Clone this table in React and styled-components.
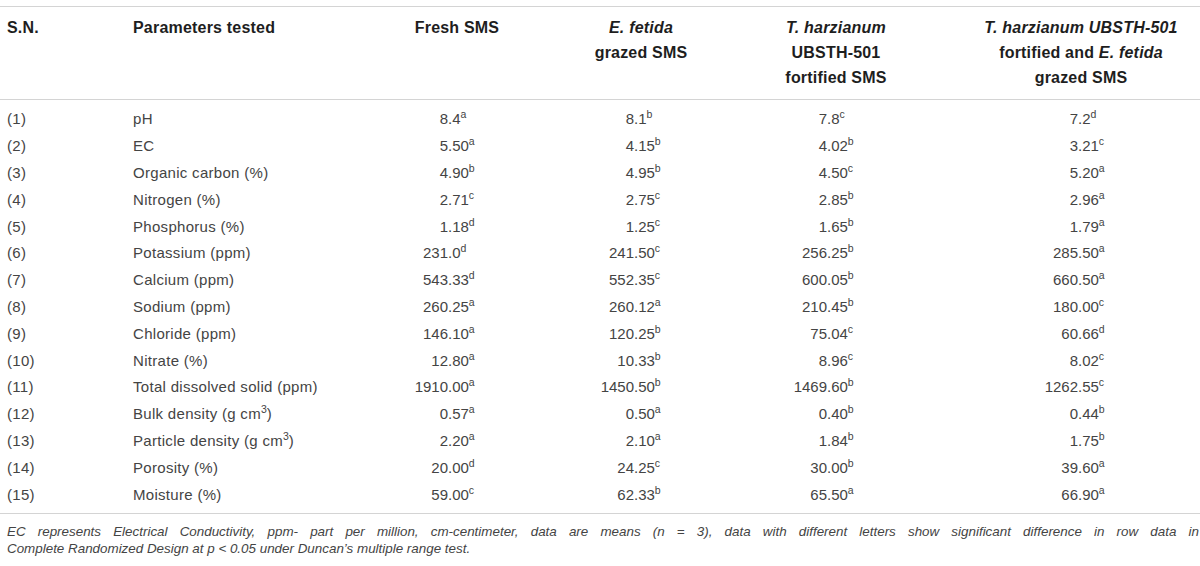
import React from 'react'
import styled, {createGlobalStyle} from 'styled-components'

const colors = {
  text: '#444444',
  head: '#1e1e1e',
  rule: '#d4d4d4',
}

const GRID = '126px 216px 230px 138px 252px 238px'

const GlobalStyle = createGlobalStyle`
  html, body {
    margin: 0;
    padding: 0;
    background: #fff;
  }
  body {
    font-family: "Liberation Sans", Arial, sans-serif;
    color: ${colors.text};
  }
`

const SectionTable = styled.section`
  width: 1200px;
  padding-top: 6px;
`

const DivHead = styled.div`
  display: grid;
  grid-template-columns: ${GRID};
  border-top: 1px solid ${colors.rule};
  border-bottom: 1px solid ${colors.rule};
  padding: 8px 0 9px;
  font-size: 16px;
  font-weight: 700;
  letter-spacing: 0.2px;
  line-height: 25px;
  color: ${colors.head};
`

const DivHeadCell = styled.div`
  padding-left: ${p => p.align === 'left' ? '7px' : '0'};
  text-align: ${p => p.align || 'center'};
  white-space: nowrap;
`

const DivBody = styled.div`
  padding: 6px 0 4.6px;
  border-bottom: 1px solid ${colors.rule};
`

const DivRow = styled.div`
  display: grid;
  grid-template-columns: ${GRID};
  height: 26.8px;
  align-items: center;
  font-size: 15px;
  letter-spacing: 0.3px;
  line-height: 18px;
`

const DivTextCell = styled.div`
  padding-left: 7px;
  white-space: nowrap;
`

const DivValueCell = styled.div`
  display: flex;
  white-space: nowrap;
  letter-spacing: 0;
`

const SpanInt = styled.span`
  display: inline-block;
  width: ${p => p.width}px;
  text-align: right;
`

const Sup = styled.sup`
  font-size: 10.5px;
  line-height: 0;
  vertical-align: 6px;
  letter-spacing: 0;
`

const DivFootnote = styled.div`
  padding: 9px 1px 0 7px;
  font-size: 13.4px;
  font-style: italic;
  line-height: 17px;
  color: ${colors.text};
`

const SpanFootLine = styled.span`
  display: block;
  white-space: nowrap;
  text-align: ${p => p.justify ? 'justify' : 'left'};
  text-align-last: ${p => p.justify ? 'justify' : 'auto'};
`

// x of the decimal point, measured from each value column's left edge
const decimals = [106, 62, 117, 116]

const rows = [
  ['(1)', 'pH', [['8.4', 'a'], ['8.1', 'b'], ['7.8', 'c'], ['7.2', 'd']]],
  ['(2)', 'EC', [['5.50', 'a'], ['4.15', 'b'], ['4.02', 'b'], ['3.21', 'c']]],
  ['(3)', 'Organic carbon (%)', [['4.90', 'b'], ['4.95', 'b'], ['4.50', 'c'], ['5.20', 'a']]],
  ['(4)', 'Nitrogen (%)', [['2.71', 'c'], ['2.75', 'c'], ['2.85', 'b'], ['2.96', 'a']]],
  ['(5)', 'Phosphorus (%)', [['1.18', 'd'], ['1.25', 'c'], ['1.65', 'b'], ['1.79', 'a']]],
  ['(6)', 'Potassium (ppm)', [['231.0', 'd'], ['241.50', 'c'], ['256.25', 'b'], ['285.50', 'a']]],
  ['(7)', 'Calcium (ppm)', [['543.33', 'd'], ['552.35', 'c'], ['600.05', 'b'], ['660.50', 'a']]],
  ['(8)', 'Sodium (ppm)', [['260.25', 'a'], ['260.12', 'a'], ['210.45', 'b'], ['180.00', 'c']]],
  ['(9)', 'Chloride (ppm)', [['146.10', 'a'], ['120.25', 'b'], ['75.04', 'c'], ['60.66', 'd']]],
  ['(10)', 'Nitrate (%)', [['12.80', 'a'], ['10.33', 'b'], ['8.96', 'c'], ['8.02', 'c']]],
  ['(11)', 'Total dissolved solid (ppm)', [['1910.00', 'a'], ['1450.50', 'b'], ['1469.60', 'b'], ['1262.55', 'c']]],
  ['(12)', <>Bulk density (g cm<Sup>3</Sup>)</>, [['0.57', 'a'], ['0.50', 'a'], ['0.40', 'b'], ['0.44', 'b']]],
  ['(13)', <>Particle density (g cm<Sup>3</Sup>)</>, [['2.20', 'a'], ['2.10', 'a'], ['1.84', 'b'], ['1.75', 'b']]],
  ['(14)', 'Porosity (%)', [['20.00', 'd'], ['24.25', 'c'], ['30.00', 'b'], ['39.60', 'a']]],
  ['(15)', 'Moisture (%)', [['59.00', 'c'], ['62.33', 'b'], ['65.50', 'a'], ['66.90', 'a']]],
]

const Value = ({value, letter, decimal}) => {
  const dot = value.indexOf('.')
  return (
    <DivValueCell>
      <SpanInt width={decimal}>{value.slice(0, dot)}</SpanInt>
      <span>{value.slice(dot)}<Sup>{letter}</Sup></span>
    </DivValueCell>
  )
}

export default function App() {
  return (
    <>
      <GlobalStyle />
      <SectionTable>
        <DivHead>
          <DivHeadCell align="left">S.N.</DivHeadCell>
          <DivHeadCell align="left">Parameters tested</DivHeadCell>
          <DivHeadCell>Fresh SMS</DivHeadCell>
          <DivHeadCell><i>E. fetida</i><br />grazed SMS</DivHeadCell>
          <DivHeadCell><i>T. harzianum</i><br />UBSTH-501<br />fortified SMS</DivHeadCell>
          <DivHeadCell>
            <i>T. harzianum UBSTH-501</i><br />fortified and <i>E. fetida</i><br />grazed SMS
          </DivHeadCell>
        </DivHead>
        <DivBody>
          {rows.map(([sn, param, values]) => (
            <DivRow key={sn}>
              <DivTextCell>{sn}</DivTextCell>
              <DivTextCell>{param}</DivTextCell>
              {values.map(([v, l], i) => (
                <Value key={i} value={v} letter={l} decimal={decimals[i]} />
              ))}
            </DivRow>
          ))}
        </DivBody>
        <DivFootnote>
          <SpanFootLine justify>
            EC represents Electrical Conductivity, ppm- part per million, cm-centimeter, data are means (n = 3), data with different letters show significant difference in row data in
          </SpanFootLine>
          <SpanFootLine>
            Complete Randomized Design at p &lt; 0.05 under Duncan’s multiple range test.
          </SpanFootLine>
        </DivFootnote>
      </SectionTable>
    </>
  )
}
